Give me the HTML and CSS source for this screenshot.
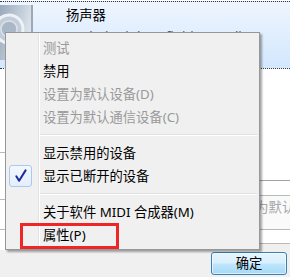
FILE: index.html
```html
<!DOCTYPE html>
<html lang="zh-CN">
<head>
<meta charset="utf-8">
<title>扬声器 菜单</title>
<link rel="stylesheet" href="styles.css">
</head>
<body>
<div class="screen">
  <div class="list">
    <div class="device">
      <div class="dev-icon">
        <svg width="40" height="56" viewBox="0 0 40 56">
          <defs>
            <linearGradient id="spkg" x1="0" y1="0" x2="1" y2="0.3">
              <stop offset="0" stop-color="#8e9fb4"/>
              <stop offset="0.7" stop-color="#c4cfdb"/>
              <stop offset="1" stop-color="#dfe5ec"/>
            </linearGradient>
          </defs>
          <rect x="-6" y="1" width="39" height="56" rx="2" fill="url(#spkg)"/>
          <rect x="31" y="1" width="2" height="56" fill="#9aa8b8"/>
          <circle cx="9" cy="25" r="14" fill="#c3cdd9" stroke="#eef2f6" stroke-width="3"/>
          <circle cx="9" cy="25" r="8" fill="#aab7c6" stroke="#dbe2ea" stroke-width="1.5"/>
        </svg>
      </div>
      <div class="dev-text">
        <div class="dev-name">扬声器</div>
        <div class="dev-desc">Realtek High Definition Audio</div>
        <div class="dev-desc">默认设备</div>
      </div>
    </div>
    <div class="lower">
      <div class="col">
        <div class="seg l1"></div>
        <div class="seg l2"></div>
        <div class="seg l3"></div>
        <div class="seg-fill"></div>
      </div>
      <div class="col"></div>
      <div class="col">
        <div class="seg r1"></div>
        <div class="seg r2"></div>
        <div class="seg r3"><span class="ghost">设为默认值(S)</span></div>
        <div class="seg r4"></div>
        <div class="seg-gray"></div>
      </div>
    </div>
  </div>
  <div class="footer">
    <button class="btn">确定</button>
  </div>

  <div class="menu">
    <div class="item disabled"><span class="gutter"></span><span class="label">测试</span></div>
    <div class="item"><span class="gutter"></span><span class="label">禁用</span></div>
    <div class="item disabled"><span class="gutter"></span><span class="label">设置为默认设备(D)</span></div>
    <div class="item disabled"><span class="gutter"></span><span class="label">设置为默认通信设备(C)</span></div>
    <div class="sep"></div>
    <div class="item"><span class="gutter"></span><span class="label">显示禁用的设备</span></div>
    <div class="item"><span class="gutter"><span class="check"><svg width="21" height="20" viewBox="0 0 21 20"><path d="M6.3 10.3 L9.1 14.8 L15.6 4.4" fill="none" stroke="#1a2ca0" stroke-width="2" stroke-linejoin="round" stroke-linecap="round"/></svg></span></span><span class="label">显示已断开的设备</span></div>
    <div class="sep"></div>
    <div class="item"><span class="gutter"></span><span class="label">关于软件 MIDI 合成器(M)</span></div>
    <div class="item"><span class="gutter"></span><span class="label">属性(P)</span></div>
  </div>

  <div class="mark"></div>
</div>
</body>
</html>
```
FILE: styles.css
```css
html, body {
  margin: 0;
  padding: 0;
}
body {
  width: 290px;
  height: 277px;
  overflow: hidden;
  background: #f0f0f0;
  font-family: "Noto Sans", "Noto Sans CJK SC", sans-serif;
  font-size: 13.3px;
  color: #000;
}
.screen {
  position: relative;
  width: 290px;
  height: 277px;
  overflow: hidden;
  background: #f0f0f0;
}
.list {
  background: #fff;
  padding-top: 1px;
}
.device {
  height: 66px;
  display: flex;
  border-top: 1px dotted #3a3a3a;
  border-bottom: 1px dotted #3a3a3a;
  background: linear-gradient(#eef5fe, #d3e7fd);
  overflow: hidden;
}
.dev-icon {
  width: 66px;
  flex: none;
  padding-top: 2px;
}
.dev-icon svg {
  display: block;
}
.dev-text {
  padding-top: 5px;
  white-space: nowrap;
}
.dev-name {
  line-height: 16px;
  height: 16px;
}
.dev-desc {
  margin-top: 5px;
  line-height: 16px;
  color: #555;
}
.lower {
  display: grid;
  grid-template-columns: 5px 1fr 30px;
  height: 181px;
}
.col {
  display: flex;
  flex-direction: column;
  min-width: 0;
}
.seg {
  flex: none;
  background: #fff;
  border-bottom: 1px solid #b9b9b9;
}
.l1 { height: 83px; }
.l2 { height: 46px; }
.l3 { height: 29px; }
.seg-fill { flex: 1; background: #fff; }
.r1 { height: 111px; border-bottom-color: #a3a3a3; }
.r2 { height: 14px; }
.r3 {
  height: 33px;
  background: #fafafa;
  white-space: nowrap;
  overflow: visible;
}
.r4 { height: 13px; }
.seg-gray { flex: 1; background: #f0f0f0; }
.ghost {
  display: block;
  margin-left: -18px;
  padding-top: 3px;
  line-height: 16px;
  color: #a6a6a6;
}
.footer {
  height: 27px;
  box-sizing: border-box;
  display: flex;
  justify-content: flex-end;
  padding: 2px 3px 0 0;
}
.btn {
  width: 76px;
  height: 23px;
  box-sizing: border-box;
  border: 1px solid #3c7fb1;
  border-radius: 3px;
  background: linear-gradient(#e5f4fd 0%, #d9effc 48%, #bee6fd 52%, #a7d9f5 100%);
  box-shadow: inset 0 0 0 1px rgba(255, 255, 255, 0.6);
  font-family: "Noto Sans", "Noto Sans CJK SC", sans-serif;
  font-size: 13.3px;
  line-height: 19px;
  padding: 0;
  color: #000;
}
.menu {
  position: absolute;
  left: 5px;
  top: 32px;
  width: 255px;
  height: 218px;
  box-sizing: border-box;
  border: 1px solid #979797;
  padding: 3px 2px;
  background: linear-gradient(to right, #f0f0f0 32px, #e2e3e3 32px, #e2e3e3 33px, #ffffff 33px, #ffffff 34px, #f0f0f0 34px);
  box-shadow: 2px 2px 2px rgba(0, 0, 0, 0.35);
}
.item {
  height: 23px;
  display: flex;
  align-items: center;
  white-space: nowrap;
}
.gutter {
  width: 30px;
  height: 23px;
  flex: none;
  display: flex;
  align-items: center;
}
.label {
  margin-left: 5px;
  line-height: 16px;
}
.disabled .label {
  color: #999;
}
.check {
  margin-left: 1px;
  width: 21px;
  height: 20px;
  border: 1px solid #a9c9ee;
  border-radius: 3px;
  background: linear-gradient(#f3f8fe, #e4eefb);
  display: flex;
}
.check svg {
  display: block;
}
.sep {
  height: 13px;
  box-sizing: border-box;
  padding-top: 6px;
  margin-left: 32px;
}
.sep::before {
  content: "";
  display: block;
  height: 1px;
  background: #e0e0e0;
  border-bottom: 1px solid #fff;
}
.mark {
  position: absolute;
  left: 20px;
  top: 223px;
  width: 99px;
  height: 26px;
  box-sizing: border-box;
  border: 3px solid #ee2626;
}
```
